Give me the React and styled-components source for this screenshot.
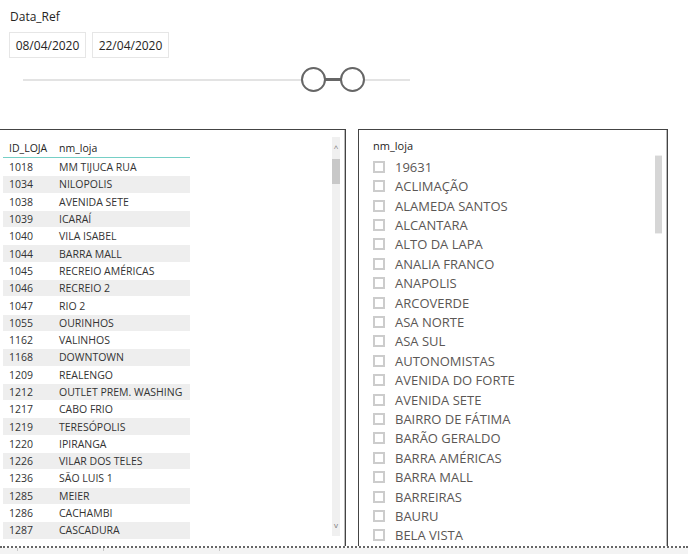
import React from 'react';
import styled, { createGlobalStyle } from 'styled-components';

const GlobalStyle = createGlobalStyle`
    html, body {
        margin: 0;
        padding: 0;
        background: #fff;
        overflow: hidden;
    }

    body {
        font-family: "Open Sans", "Noto Sans", sans-serif;
        color: #252423;
    }
`

const Page = styled.div`
    width: 688px;
    height: 554px;
    display: flex;
    flex-direction: column;
    overflow: hidden;
`

const Filters = styled.div`
    height: 129px;
    padding: 9px 0 0 9px;
    box-sizing: border-box;
`

const Title = styled.div`
    font-size: 12px;
    line-height: 16px;
    padding-left: 1px;
    color: #252423;
`

const DateRow = styled.div`
    display: flex;
    gap: 6px;
    margin-top: 7px;
`

const DateBox = styled.div`
    width: 77px;
    height: 26px;
    box-sizing: border-box;
    border: 1px solid #e6e6e6;
    font-size: 12px;
    display: flex;
    align-items: center;
    justify-content: center;
    color: #252423;
`

const Slider = styled.div`
    position: relative;
    width: 387px;
    height: 2px;
    margin: 21px 0 0 14px;
    background: #e3e3e3;
`

const Range = styled.div`
    position: absolute;
    top: -1px;
    height: 3px;
    background: #666;
`

const Handle = styled.div`
    position: absolute;
    top: -12px;
    width: 25px;
    height: 25px;
    box-sizing: border-box;
    margin-left: -12px;
    border: 2.5px solid #666;
    border-radius: 50%;
    background: #fff;
`

const Panels = styled.div`
    flex: 1;
    display: flex;
    gap: 12px;
    min-height: 0;
`

const Panel = styled.div`
    position: relative;
    box-sizing: border-box;
    width: ${p => p.$width}px;
    margin-left: ${p => p.$offset || 0}px;
    border: 1px solid #444;
    border-bottom: none;
    box-shadow: inset -1px 0 0 #bbb;
    overflow: hidden;
`

const Table = styled.div`
    width: 187px;
    margin: 8px 0 0 3px;
    font-size: 10.5px;
`

const HeadRow = styled.div`
    display: flex;
    height: 19px;
    align-items: center;
    border-bottom: 1px solid #76cfc6;
    color: #252423;
`

const Row = styled.div`
    display: flex;
    height: 17.3px;
    align-items: center;
    background: ${p => p.$striped ? '#eeeeee' : '#fff'};
    border-top: 1px solid #fff;
    box-sizing: border-box;
    color: #333;
`

const IdCell = styled.div`
    width: 56px;
    padding-left: 6px;
    box-sizing: border-box;
`

const NameCell = styled.div`
    flex: 1;
    white-space: nowrap;
`

const ScrollTrack = styled.div`
    position: absolute;
    top: 7px;
    right: 5px;
    bottom: 10px;
    width: 8px;
    background: #f0f0f0;
    display: flex;
    flex-direction: column;
    align-items: center;
    font-size: 8px;
    color: #777;
`

const Arrow = styled.div`
    height: 22px;
    line-height: 22px;
    margin-top: ${p => p.$down ? 'auto' : '0'};
`

const Thumb = styled.div`
    width: 8px;
    height: ${p => p.$h}px;
    background: ${p => p.$color || '#c8c8c8'};
`

const SlicerHead = styled.div`
    font-size: 11px;
    padding: 8px 0 0 14px;
    height: 27px;
    box-sizing: border-box;
    color: #252423;
`

const List = styled.div`
    padding-left: 14px;
`

const Item = styled.div`
    display: flex;
    align-items: center;
    height: 19.42px;
    font-size: 13px;
    color: #5b5755;
    white-space: nowrap;
`

const Check = styled.span`
    width: 12px;
    height: 12px;
    box-sizing: border-box;
    border: 2px solid #cccccc;
    margin-right: 10px;
    flex-shrink: 0;
`

const SideThumb = styled.div`
    position: absolute;
    top: 25px;
    right: 5px;
    width: 7px;
    height: 77px;
    background: #d6d6d6;
    border-top: 1px solid #eee;
    border-bottom: 1px solid #eee;
`

const Dotted = styled.div`
    height: 0;
    border-top: 2px dotted #666;
`

const TabStrip = styled.div`
    height: 6px;
    display: flex;
    background: #f3f3f3;
`

const Tab = styled.div`
    width: ${p => p.$w}px;
    border-right: 1px solid #c8c8c8;
    height: 3px;
`

const rows = [
    ['1018', 'MM TIJUCA RUA'],
    ['1034', 'NILOPOLIS'],
    ['1038', 'AVENIDA SETE'],
    ['1039', 'ICARAÍ'],
    ['1040', 'VILA ISABEL'],
    ['1044', 'BARRA MALL'],
    ['1045', 'RECREIO AMÉRICAS'],
    ['1046', 'RECREIO 2'],
    ['1047', 'RIO 2'],
    ['1055', 'OURINHOS'],
    ['1162', 'VALINHOS'],
    ['1168', 'DOWNTOWN'],
    ['1209', 'REALENGO'],
    ['1212', 'OUTLET PREM. WASHING'],
    ['1217', 'CABO FRIO'],
    ['1219', 'TERESÓPOLIS'],
    ['1220', 'IPIRANGA'],
    ['1226', 'VILAR DOS TELES'],
    ['1236', 'SÃO LUIS 1'],
    ['1285', 'MEIER'],
    ['1286', 'CACHAMBI'],
    ['1287', 'CASCADURA'],
]

const lojas = [
    '19631', 'ACLIMAÇÃO', 'ALAMEDA SANTOS', 'ALCANTARA', 'ALTO DA LAPA',
    'ANALIA FRANCO', 'ANAPOLIS', 'ARCOVERDE', 'ASA NORTE', 'ASA SUL',
    'AUTONOMISTAS', 'AVENIDA DO FORTE', 'AVENIDA SETE', 'BAIRRO DE FÁTIMA',
    'BARÃO GERALDO', 'BARRA AMÉRICAS', 'BARRA MALL', 'BARREIRAS', 'BAURU',
    'BELA VISTA',
]

// handle positions along the track, in px
const low = 290
const high = 329

function App() {
    return (
        <Page>
            <GlobalStyle />
            <Filters>
                <Title>Data_Ref</Title>
                <DateRow>
                    <DateBox>08/04/2020</DateBox>
                    <DateBox>22/04/2020</DateBox>
                </DateRow>
                <Slider>
                    <Range style={{ left: low, width: high - low }} />
                    <Handle style={{ left: low }} />
                    <Handle style={{ left: high }} />
                </Slider>
            </Filters>

            <Panels>
                <Panel $width={347} $offset={-1}>
                    <Table>
                        <HeadRow>
                            <IdCell>ID_LOJA</IdCell>
                            <NameCell>nm_loja</NameCell>
                        </HeadRow>
                        {rows.map(([id, name], i) => (
                            <Row key={id} $striped={i % 2 === 1}>
                                <IdCell>{id}</IdCell>
                                <NameCell>{name}</NameCell>
                            </Row>
                        ))}
                    </Table>
                    <ScrollTrack>
                        <Arrow>^</Arrow>
                        <Thumb $h={25} />
                        <Arrow $down>v</Arrow>
                    </ScrollTrack>
                </Panel>

                <Panel $width={310}>
                    <SlicerHead>nm_loja</SlicerHead>
                    <List>
                        {lojas.map(name => (
                            <Item key={name}>
                                <Check />
                                {name}
                            </Item>
                        ))}
                    </List>
                    <SideThumb />
                </Panel>
            </Panels>

            <Dotted />
            <TabStrip>
                <Tab $w={17} />
                <Tab $w={85} />
                <Tab $w={115} />
            </TabStrip>
        </Page>
    );
}

export default App;
